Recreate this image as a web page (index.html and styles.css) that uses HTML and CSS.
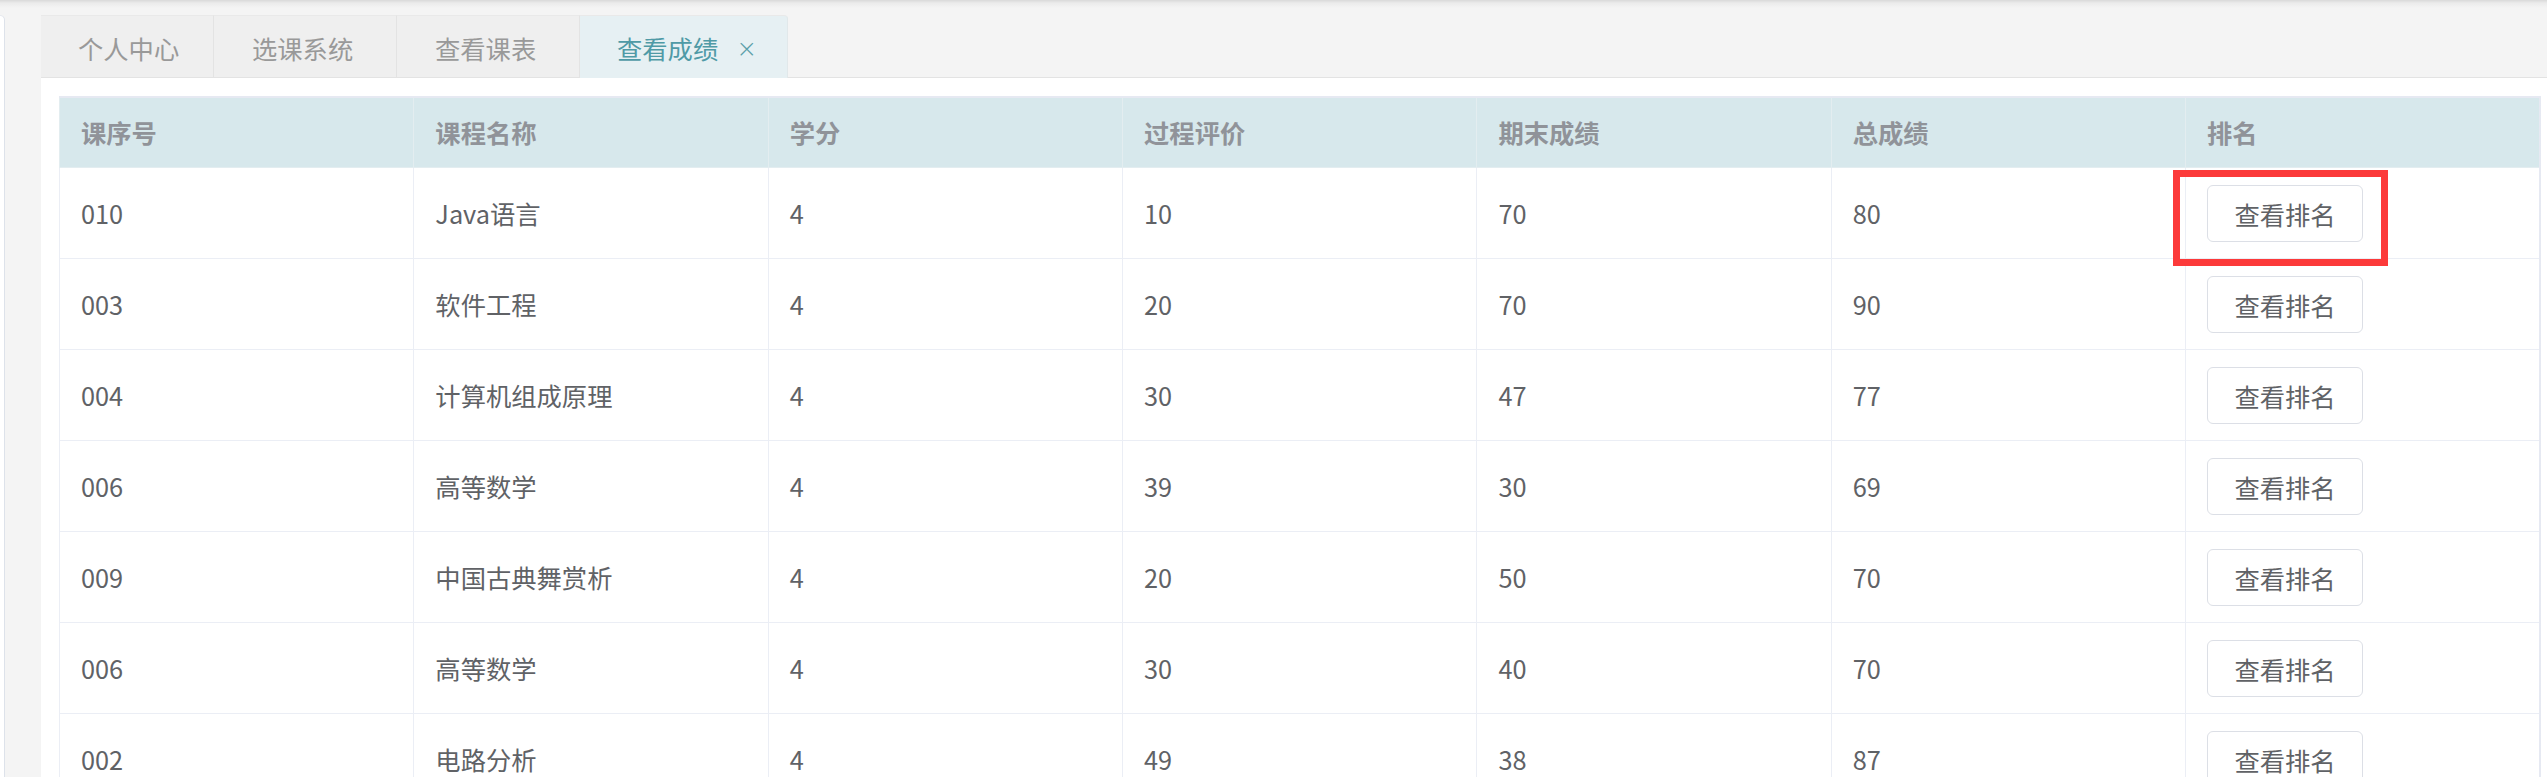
FILE: index.html
```html
<!DOCTYPE html>
<html lang="zh-CN">
<head>
<meta charset="utf-8">
<title>查看成绩</title>
<link rel="stylesheet" href="styles.css">
</head>
<body>
<div class="app">
  <aside class="sidebar"></aside>
  <main class="main">
    <nav class="tabs">
      <div class="tab tab-1">个人中心</div>
      <div class="tab tab-2">选课系统</div>
      <div class="tab tab-3">查看课表</div>
      <div class="tab tab-4 active">查看成绩<span class="close">×</span></div>
    </nav>
    <section class="panel">
      <table class="grid">
        <thead>
          <tr><th>课序号</th><th>课程名称</th><th>学分</th><th>过程评价</th><th>期末成绩</th><th>总成绩</th><th>排名</th></tr>
        </thead>
        <tbody>
          <tr><td>010</td><td>Java语言</td><td>4</td><td>10</td><td>70</td><td>80</td><td><span class="btn-wrap"><button class="btn">查看排名</button><span class="highlight"></span></span></td></tr>
          <tr><td>003</td><td>软件工程</td><td>4</td><td>20</td><td>70</td><td>90</td><td><button class="btn">查看排名</button></td></tr>
          <tr><td>004</td><td>计算机组成原理</td><td>4</td><td>30</td><td>47</td><td>77</td><td><button class="btn">查看排名</button></td></tr>
          <tr><td>006</td><td>高等数学</td><td>4</td><td>39</td><td>30</td><td>69</td><td><button class="btn">查看排名</button></td></tr>
          <tr><td>009</td><td>中国古典舞赏析</td><td>4</td><td>20</td><td>50</td><td>70</td><td><button class="btn">查看排名</button></td></tr>
          <tr><td>006</td><td>高等数学</td><td>4</td><td>30</td><td>40</td><td>70</td><td><button class="btn">查看排名</button></td></tr>
          <tr><td>002</td><td>电路分析</td><td>4</td><td>49</td><td>38</td><td>87</td><td><button class="btn">查看排名</button></td></tr>
        </tbody>
      </table>
    </section>
  </main>
</div>
</body>
</html>
```
FILE: styles.css
```css
* { box-sizing: border-box; }
html, body { margin: 0; padding: 0; }
body {
  width: 2547px;
  height: 777px;
  overflow: hidden;
  background: #f4f4f4;
  font-family: "Microsoft YaHei", "Noto Sans CJK SC", "Noto Sans", sans-serif;
  font-size: 25.3px;
  color: #606266;
}
.app {
  display: flex;
  height: 777px;
  background: linear-gradient(#d9d9d9 0px, #ebebeb 3px, #f4f4f4 8px);
}
.sidebar {
  width: 5px;
  margin-top: 15px;
  background: #ffffff;
  border-right: 1px solid #dde2ea;
  border-top: 1px solid #e6e9ee;
  border-top-right-radius: 5px;
}
.main {
  flex: 1;
  display: flex;
  flex-direction: column;
  padding-left: 36px;
  padding-top: 15px;
  min-width: 0;
}
.tabs {
  display: flex;
  height: 63px;
  border-bottom: 1px solid #e3e3e3;
}
.tab {
  height: 62px;
  background: #efefef;
  border-top: 1px solid #e9e9e9;
  border-right: 1px solid #e3e3e3;
  color: #999999;
  padding-left: 37px;
  padding-top: 2px;
  display: flex;
  align-items: center;
  white-space: nowrap;
}
.tab-1 { width: 173px; }
.tab-2 { width: 183px; padding-left: 38px; }
.tab-3 { width: 183px; padding-left: 38px; }
.tab-4 { width: 208px; }
.tab.active {
  background: #e6f0f3;
  color: #4f9aa6;
  border-right: 1px solid #e1e8ea;
  border-top-right-radius: 4px;
  height: 63px;
  margin-bottom: -1px;
}
.close {
  font-size: 25px;
  margin-left: 18px;
  color: #5c9fa9;
  font-family: "DejaVu Sans", sans-serif;
  font-weight: 300;
}
.panel {
  flex: 1;
  background: #ffffff;
  padding: 18px 6px 0 18px;
}
.grid {
  width: 100%;
  border-collapse: collapse;
  table-layout: fixed;
  border: 1px solid #ebeef5;
  border-top: 2px solid #e6e9f2;
  border-right: 2px solid #e6e9f2;
}
.grid th, .grid td {
  text-align: left;
  padding: 0 0 0 21px;
  border: 1px solid #ebeef5;
  white-space: nowrap;
  vertical-align: middle;
}
.grid th {
  height: 70px;
  background: #d7e8ec;
  color: #909399;
  font-weight: bold;
  border-color: #e3edf0;
}
.grid td {
  height: 91px;
  color: #606266;
}
.btn {
  width: 156px;
  height: 57px;
  background: #ffffff;
  border: 1px solid #dcdfe6;
  border-radius: 6px;
  color: #606266;
  font-family: inherit;
  font-size: 25.3px;
  padding: 0;
  margin-top: 2px;
  vertical-align: middle;
}
.btn-wrap {
  position: relative;
  display: inline-block;
  vertical-align: middle;
}
.highlight {
  position: absolute;
  left: -34px;
  right: -25px;
  top: -13px;
  bottom: -24px;
  border: 7px solid #fc3a3a;
  z-index: 2;
}
```
